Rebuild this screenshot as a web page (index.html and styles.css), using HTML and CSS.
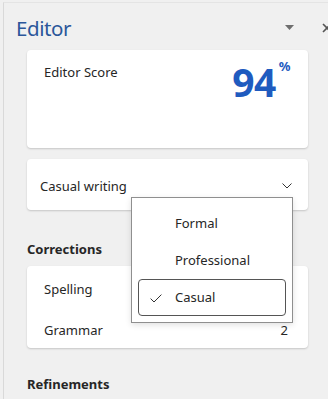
FILE: index.html
```html
<!DOCTYPE html>
<html>
<head>
<meta charset="utf-8">
<link rel="stylesheet" href="styles.css">
</head>
<body>
<div class="panel">
  <div class="header">
    <h1 class="title">Editor</h1>
    <div class="header-icons">
      <svg class="tri" width="9" height="5" viewBox="0 0 9 5"><path d="M0 0H9L4.5 5Z" fill="#6e6e6e"/></svg>
      <svg class="close" width="10" height="10" viewBox="0 0 10 10"><path d="M1 1L9 9M9 1L1 9" stroke="#555" stroke-width="1.6"/></svg>
    </div>
  </div>

  <div class="card score-card">
    <span class="score-label">Editor Score</span>
    <span class="score-value">94<span class="pct">%</span></span>
  </div>

  <div class="card select-card">
    <span class="select-text">Casual writing</span>
    <svg class="chev" width="10" height="6" viewBox="0 0 10 6"><path d="M0.5 0.5L5 5L9.5 0.5" fill="none" stroke="#333" stroke-width="1"/></svg>
  </div>

  <h2 class="section">Corrections</h2>
  <div class="card list-card">
    <div class="row"><span>Spelling</span><span class="num">1</span></div>
    <div class="row"><span>Grammar</span><span class="num">2</span></div>
  </div>

  <h2 class="section refine">Refinements</h2>

  <div class="menu">
    <div class="item">Formal</div>
    <div class="item">Professional</div>
    <div class="item selected">
      <svg class="check" width="12" height="9" viewBox="0 0 12 9"><path d="M0.6 4.6L4 8L11.4 0.6" fill="none" stroke="#333" stroke-width="1"/></svg>
      Casual
    </div>
  </div>
</div>
</body>
</html>
```

FILE: styles.css
```css
html, body {
  margin: 0;
  padding: 0;
}
body {
  width: 328px;
  height: 399px;
  overflow: hidden;
  background: #f0f0f0;
  font-family: "Noto Sans", "Open Sans", sans-serif;
  color: #262626;
}
.panel {
  position: relative;
  margin-left: 3px;
  margin-top: 2px;
  height: 397px;
  border-left: 1px solid #d9d9d9;
  border-top: 1px solid #e4e4e4;
  padding: 0 20px 0 23px;
  box-sizing: border-box;
}
.header {
  display: flex;
  align-items: center;
  justify-content: space-between;
  height: 47px;
  margin-left: -11px;
  margin-right: -24px;
}
.title {
  margin: 0;
  font-size: 20.5px;
  font-weight: 400;
  color: #2b579a;
  letter-spacing: -0.4px;
  line-height: 28px;
  padding-top: 2px;
}
.header-icons {
  display: flex;
  align-items: center;
  gap: 28px;
  padding-top: 2px;
}
.tri { display: block; }
.close { display: block; }
.card {
  background: #fff;
  border-radius: 4px;
  box-shadow: 0 1px 2px rgba(0,0,0,0.18);
}
.score-card {
  height: 98px;
  box-sizing: border-box;
  display: flex;
  justify-content: space-between;
  align-items: flex-start;
  padding: 12px 18px 0 17px;
}
.score-label {
  font-size: 13px;
  line-height: 18px;
  margin-top: 1px;
}
.score-value {
  display: flex;
  align-items: flex-start;
  font-size: 39px;
  font-weight: 700;
  color: #1f5bbf;
  line-height: 40px;
  margin-top: 0;
  letter-spacing: -0.5px;
}
.pct {
  font-size: 13px;
  font-weight: 700;
  line-height: 14px;
  margin-top: -3px;
  margin-left: 3px;
}
.select-card {
  margin-top: 11px;
  height: 51px;
  box-sizing: border-box;
  display: flex;
  align-items: center;
  justify-content: space-between;
  padding: 3px 16px 0 13px;
}
.select-text {
  font-size: 13px;
}
.section {
  margin: 0;
  font-size: 13px;
  font-weight: 700;
  line-height: 18px;
  padding-top: 30px;
  padding-bottom: 8px;
}
.list-card {
  height: 82px;
  box-sizing: border-box;
  padding: 2px 20px 0 17px;
}
.row {
  display: flex;
  justify-content: space-between;
  align-items: center;
  height: 41px;
  font-size: 13px;
}
.refine {
  padding-top: 27px;
}
.menu {
  position: absolute;
  left: 127px;
  top: 194px;
  width: 162px;
  height: 126px;
  box-sizing: border-box;
  background: #fff;
  border: 1px solid #8f8f8f;
  box-shadow: 0 2px 6px rgba(0,0,0,0.12);
  padding: 6px;
  display: flex;
  flex-direction: column;
}
.item {
  height: 38px;
  display: flex;
  align-items: center;
  padding-left: 37px;
  font-size: 13px;
  box-sizing: border-box;
  position: relative;
}
.item.selected {
  border: 1px solid #555;
  border-radius: 4px;
  padding-left: 36px;
}
.check {
  position: absolute;
  left: 11px;
  top: 14px;
}
```
